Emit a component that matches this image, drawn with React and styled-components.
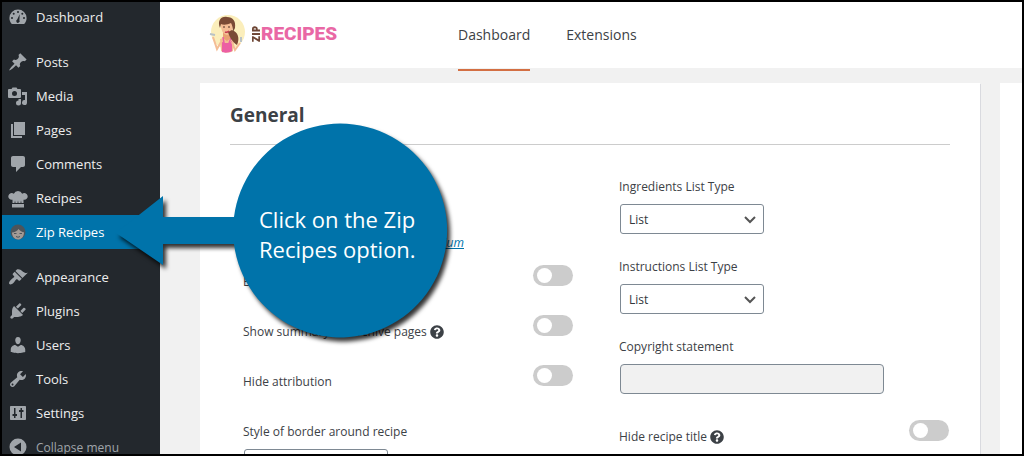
import React from 'react';
import styled, { createGlobalStyle } from 'styled-components';
import { FaQuestionCircle } from 'react-icons/fa';

const menu = [
  { label: 'Dashboard', icon: 'dashboard', gap: true },
  { label: 'Posts', icon: 'posts' },
  { label: 'Media', icon: 'media' },
  { label: 'Pages', icon: 'pages' },
  { label: 'Comments', icon: 'comments' },
  { label: 'Recipes', icon: 'chef' },
  { label: 'Zip Recipes', icon: 'zip', active: true, gap: true },
  { label: 'Appearance', icon: 'appearance' },
  { label: 'Plugins', icon: 'plugins' },
  { label: 'Users', icon: 'users' },
  { label: 'Tools', icon: 'tools' },
  { label: 'Settings', icon: 'settings' },
];

// 20x20 menu glyphs
const icons = {
  dashboard: (
    <path
      fillRule="evenodd"
      d="M3.800 17h12.400c1.500-1.600 2.400-3.700 2.400-6A8.600 8.600 0 0 0 10 2.500a8.600 8.600 0 0 0-8.600 8.500c0 2.300.9 4.400 2.400 6zM10 4a1 1 0 1 1 0 2 1 1 0 0 1 0-2zM5.700 5.800a1 1 0 1 1 0 2 1 1 0 0 1 0-2zm8.600 0a1 1 0 1 1 0 2 1 1 0 0 1 0-2zM4 10.100a1 1 0 1 1 0 2 1 1 0 0 1 0-2zm12 0a1 1 0 1 1 0 2 1 1 0 0 1 0-2zm-4.300-2.800-.3 5.900a1.700 1.700 0 1 1-2.200-.6z"
    />
  ),
  posts: (
    <path d="M10.440 3.020l1.820-1.820 6.360 6.350-1.830 1.820c-1.050-.68-2.480-.57-3.410.36l-.75.75c-.92.93-1.040 2.350-.35 3.410l-1.830 1.820-2.410-2.410-2.800 2.790c-.42.42-3.380 2.710-3.800 2.290s1.860-3.390 2.280-3.810l2.790-2.790L4.100 9.360l1.830-1.820c1.050.69 2.480.57 3.400-.36l.75-.75c.93-.92 1.050-2.350.36-3.410z" />
  ),
  media: (
    <path
      fillRule="evenodd"
      d="M1 3h2.500l1-1.500h4L9.500 3H12a1 1 0 0 1 1 1v7a1 1 0 0 1-1 1H1a1 1 0 0 1-1-1V4a1 1 0 0 1 1-1zm5.500 2a2.500 2.500 0 1 0 0 5 2.500 2.500 0 0 0 0-5zM14 6h5v10.500a2.500 2.500 0 1 1-2-2.400V9h-3zM10.500 13H13v4a2.500 2.500 0 1 1-2.500-2.500z"
    />
  ),
  pages: <path d="M6 15V2h11v13H6zm-1 1h9v2H3V4h2v12z" />,
  comments: <path d="M5 2h10c1.100 0 2 .9 2 2v7c0 1.100-.9 2-2 2h-2l-5 5v-5H5c-1.100 0-2-.9-2-2V4c0-1.100.9-2 2-2z" />,
  chef: (
    <path d="M4.500 15v-3.300A3.400 3.400 0 1 1 5.800 5.700a4.600 4.600 0 0 1 8.400 0 3.400 3.400 0 1 1 1.300 6V15h-2l-.5-2.500-.5 2.500h-2l-.5-2.500-.5 2.500h-2L7 12.500 6.500 15zM4 16h12v3.500H4z" />
  ),
  appearance: (
    <path d="M14.480 11.060L7.410 3.990l1.500-1.500c.5-.56 2.300-.47 3.510.32 1.210.8 1.430 1.280 2.910 2.100 1.180.64 2.450 1.260 4.450.85zm-.71.71L6.700 4.700 4.930 6.470c-.39.39-.39 1.020 0 1.410l1.060 1.060c.39.39.39 1.030 0 1.420-.6.6-1.430 1.110-2.210 1.690-.35.26-.7.53-1.010.84C1.430 14.230.4 16.080 1.400 17.070c.99 1 2.840-.03 4.180-1.360.31-.31.58-.66.85-1.020.57-.78 1.080-1.610 1.690-2.210.39-.39 1.020-.39 1.410 0l1.060 1.060c.39.39 1.020.39 1.410 0z" />
  ),
  plugins: (
    <path d="M13.110 4.360L9.870 7.600 8 5.730l3.240-3.240c.35-.34 1.050-.2 1.560.32.52.51.66 1.210.31 1.550zm-8 1.770l.91-1.120 9.010 9.010-1.190.84c-.71.71-2.630 1.160-3.820 1.160H6.140L4.900 17.260c-.59.59-1.540.59-2.120 0-.59-.58-.59-1.530 0-2.120l1.240-1.240v-3.880c0-1.130.4-3.190 1.090-3.890zm7.260 3.970l3.240-3.240c.34-.35 1.040-.21 1.550.31.52.51.66 1.210.31 1.550l-3.240 3.250z" />
  ),
  users: (
    <path d="M10 9.250c-2.270 0-2.730-3.440-2.730-3.440C7 4.020 7.820 2 9.970 2c2.160 0 2.980 2.020 2.710 3.810 0 0-.41 3.440-2.680 3.440zm0 2.570L12.720 10c2.390 0 4.520 2.330 4.520 4.530v2.490s-3.650 1.130-7.240 1.130c-3.650 0-7.240-1.130-7.240-1.130v-2.490c0-2.250 1.940-4.480 4.470-4.480z" />
  ),
  tools: (
    <path d="M16.680 9.770c-1.340 1.340-3.300 1.670-4.950.99l-5.410 6.520c-.99.99-2.590.99-3.580 0s-.99-2.590 0-3.570l6.520-5.420c-.68-1.650-.35-3.610.99-4.950 1.280-1.280 3.120-1.620 4.720-1.060l-2.890 2.890 2.820 2.820 2.860-2.870c.53 1.580.18 3.390-1.080 4.650zM3.810 16.210c.4.390 1.040.39 1.430 0 .4-.4.4-1.040 0-1.430-.39-.4-1.030-.4-1.430 0-.39.39-.39 1.030 0 1.430z" />
  ),
  settings: (
    <path
      fillRule="evenodd"
      d="M3 3h14c.6 0 1 .4 1 1v12c0 .6-.4 1-1 1H3c-.6 0-1-.4-1-1V4c0-.6.4-1 1-1zm3 2v6H4.500v2H6v2h1.500v-2H9v-2H7.500V5zm6.500 0v2H11v2h1.500v6H14V9h1.500V7H14V5z"
    />
  ),
  collapse: (
    <path fillRule="evenodd" d="M10 1.500a8.500 8.500 0 1 1 0 17 8.500 8.500 0 0 1 0-17zM13 5.500L6 10l7 4.500z" />
  ),
  zip: (
    <>
      <circle cx="10" cy="10" r="7.500" fill="#4d545a" />
      <path d="M4 10.500c2.500 0 5-1.500 6.500-3.500 1.500 2 3.500 3 5.500 3.200 0 4.300-2.500 7.300-6 7.300s-6-3-6-7z" fill="#a39a95" />
      <path d="M6 11.500h2.500M11.500 11.500H14M8 14.500q2 1.500 4 0" stroke="#4d545a" fill="none" />
    </>
  ),
};

const MenuIcon = ({ name }) => (
  <Glyph viewBox="0 0 20 20" aria-hidden="true">
    {icons[name]}
  </Glyph>
);

const Logo = () => (
  <LogoLink href="#home" aria-label="Zip Recipes">
    <LogoFace viewBox="0 0 40 40" aria-hidden="true">
      <circle cx="22" cy="18" r="17" fill="#fbeebb" />
      <path d="M17 18h8v7l-4 3-4-3z" fill="#e9a173" />
      <path d="M14 25l3-1 4 3 4-3 3 2-1 11c-3 2-9 2-12 0z" fill="#f4bd95" />
      <path d="M16 28l3 1h4l3-2v10c-3 2-8 2-10 1z" fill="#ec5fa3" />
      <path d="M17 23l1 6M25 24l-2 5" stroke="#ec5fa3" strokeWidth="1.500" />
      <path d="M15 9c1-4 12-4 12 2 0 6-3 10-6 10s-7-5-6-12z" fill="#f4bd95" />
      <path d="M14 14C11 7 15 2 21 3c6 0 9 4 8 11l-2 4c0-5-1-7-2-9-4 2-8 2-10 1z" fill="#7a4a35" />
      <path d="M26 16c6 2 8 8 5 15-5-3-8-9-9-13z" fill="#7a4a35" />
      <path d="M17 13h2M22 13h2" stroke="#4d2f25" />
      <path d="M19 18q2 1 4-1" stroke="#c33c50" strokeWidth="1.500" fill="none" />
      <path d="M15 28l-4 7-4-12M26 28l3 8 5-7" stroke="#f4bd95" strokeWidth="2" fill="none" />
      <path d="M4 20l5 1M35 28v-5" stroke="#b9c2c6" strokeWidth="2" />
    </LogoFace>
    <Zip>ZIP</Zip>
    <Wordmark>RECIPES</Wordmark>
  </LogoLink>
);

const ToggleField = ({ id, label, help }) => (
  <ToggleRow>
    <ToggleLabel htmlFor={id}>
      {label}
      {help && <FaQuestionCircle size={14} />}
    </ToggleLabel>
    <Switch type="checkbox" role="switch" id={id} />
  </ToggleRow>
);

const SelectField = ({ id, label, options }) => (
  <Field>
    <Label htmlFor={id}>{label}</Label>
    <SelectBox>
      <Select id={id}>
        {options.map((option) => (
          <option key={option}>{option}</option>
        ))}
      </Select>
      <Chevron viewBox="0 0 12 8" aria-hidden="true">
        <path d="M1 1l5 5 5-5" />
      </Chevron>
    </SelectBox>
  </Field>
);

const Callout = () => (
  <CalloutLayer>
    <CalloutShape viewBox="0 0 344 230" aria-hidden="true">
      <path d="M1 113L48 76V97H119A107 107 0 1 1 119 124H48V145Z" />
    </CalloutShape>
    <CalloutText>
      Click on the Zip
      <br />
      Recipes option.
    </CalloutText>
  </CalloutLayer>
);

const App = () => {
  return (
    <Page>
      <GlobalStyle />
      <Sidebar>
        <MenuList>
          {menu.map((item) => (
            <MenuItem key={item.label} $gap={item.gap}>
              <MenuLink href="#menu" $active={item.active}>
                <MenuIcon name={item.icon} />
                {item.label}
              </MenuLink>
            </MenuItem>
          ))}
          <MenuItem>
            <CollapseButton type="button">
              <MenuIcon name="collapse" />
              Collapse menu
            </CollapseButton>
          </MenuItem>
        </MenuList>
      </Sidebar>
      <Main>
        <Header>
          <Logo />
          <Nav>
            <NavLink href="#dashboard" $active>
              Dashboard
            </NavLink>
            <NavLink href="#extensions">Extensions</NavLink>
          </Nav>
        </Header>
        <Content>
          <Card>
            <CardTitle>General</CardTitle>
            <Columns>
              <Column>
                <Notice>
                  <a href="#premium">premium</a>
                </Notice>
                <ToggleField id="enable" label="Enable" />
                <ToggleField id="summary" label="Show summary on archive pages" help />
                <ToggleField id="attribution" label="Hide attribution" />
                <SelectField id="border" label="Style of border around recipe" options={['']} />
              </Column>
              <Column>
                <SelectField id="ingredients" label="Ingredients List Type" options={['List']} />
                <SelectField id="instructions" label="Instructions List Type" options={['List']} />
                <Field>
                  <Label htmlFor="copyright">Copyright statement</Label>
                  <TextInput id="copyright" type="text" disabled />
                </Field>
                <ToggleField id="title" label="Hide recipe title" help />
              </Column>
            </Columns>
          </Card>
          <Card as="aside" />
        </Content>
      </Main>
      <Callout />
      <Frame />
    </Page>
  );
};

export default App;

const GlobalStyle = createGlobalStyle`
  * {
    box-sizing: border-box;
  }
  body {
    margin: 0;
    background-color: #f1f1f1;
    color: #3c4146;
    font-family: 'Open Sans', 'Noto Sans', sans-serif;
    font-size: 13px;
    line-height: 20px;
  }
`;
const Page = styled.div`
  position: relative;
  display: flex;
  height: 100vh;
  overflow: hidden;
`;
const Frame = styled.div`
  position: fixed;
  inset: 0;
  border: 2px solid #000;
  pointer-events: none;
`;
const Sidebar = styled.nav`
  flex: none;
  width: 160px;
  background-color: #23282d;
`;
const MenuList = styled.ul`
  margin: 0;
  padding: 0;
  list-style: none;
`;
const MenuItem = styled.li`
  margin-bottom: ${({ $gap }) => ($gap ? '11px' : '0')};
`;
const MenuLink = styled.a`
  display: flex;
  align-items: center;
  gap: 8px;
  height: 34px;
  padding-left: 8px;
  color: ${({ $active }) => ($active ? '#fff' : '#eee')};
  background-color: ${({ $active }) => ($active ? '#0073aa' : 'transparent')};
  text-decoration: none;
`;
const CollapseButton = styled.button`
  display: flex;
  align-items: center;
  gap: 8px;
  width: 100%;
  height: 34px;
  padding: 0 0 0 8px;
  border: 0;
  background: none;
  color: #a0a5aa;
  font-family: inherit;
  font-size: 12px;
  cursor: pointer;
`;
const Glyph = styled.svg`
  flex: none;
  width: 20px;
  height: 20px;
  fill: #a0a5aa;
`;
const Main = styled.main`
  flex: 1;
  min-width: 0;
`;
const Header = styled.header`
  display: flex;
  height: 68px;
  padding-left: 46px;
  background-color: #fff;
`;
const LogoLink = styled.a`
  display: flex;
  align-items: center;
  width: 252px;
  text-decoration: none;
`;
const LogoFace = styled.svg`
  width: 40px;
  height: 40px;
  margin-right: 5px;
`;
const Zip = styled.span`
  color: #6d4534;
  font-size: 10px;
  font-weight: 800;
  line-height: 10px;
  writing-mode: vertical-rl;
  transform: rotate(180deg);
`;
const Wordmark = styled.span`
  color: #e968a5;
  font-family: 'Liberation Sans Narrow', Roboto, sans-serif;
  font-size: 19px;
  font-weight: 900;
`;
const Nav = styled.nav`
  display: flex;
  gap: 36px;
  height: 71px;
`;
const NavLink = styled.a`
  height: 71px;
  border-bottom: 2px solid ${({ $active }) => ($active ? '#d36f43' : 'transparent')};
  color: #3c4146;
  font-size: 14px;
  line-height: 69px;
  text-decoration: none;
`;
const Content = styled.div`
  display: grid;
  grid-template-columns: minmax(0, 1fr) 24px;
  gap: 20px;
  padding: 15px 0 0 40px;
`;
const Card = styled.section`
  min-height: 400px;
  padding: 0 30px;
  background-color: #fff;
  box-shadow: 1px 1px 0 #d9dadf;
`;
const CardTitle = styled.h2`
  margin: 0 0 32px;
  padding-top: 4px;
  border-bottom: 1px solid #ccc;
  font-size: 19px;
  line-height: 57px;
`;
const Columns = styled.div`
  display: grid;
  grid-template-columns: 1fr 1fr;
  gap: 46px;
  padding: 0 1px 0 13px;
`;
const Column = styled.div`
  display: flex;
  flex-direction: column;
`;
const Notice = styled.p`
  width: 221px;
  height: 88px;
  margin: 0;
  padding-top: 56px;
  font-size: 12px;
  font-style: italic;
  text-align: right;
  a {
    color: #0073aa;
  }
`;
const Field = styled.div`
  display: flex;
  flex-direction: column;
  gap: 7px;
  margin-bottom: 23px;
`;
const ToggleRow = styled.div`
  display: flex;
  align-items: flex-start;
  justify-content: space-between;
  height: 50px;
  ${Field} + & {
    margin-top: 3px;
  }
  & + ${Field} {
    margin-top: 7px;
  }
`;
const Label = styled.label`
  display: flex;
  align-items: center;
  gap: 3px;
  font-size: 12px;
`;
const ToggleLabel = styled(Label)`
  padding-top: 7px;
`;
const Switch = styled.input`
  appearance: none;
  flex: none;
  width: 40px;
  height: 21px;
  margin: 0;
  padding: 3px 4px;
  border-radius: 11px;
  background-color: #ccc;
  cursor: pointer;
  &::before {
    content: '';
    display: block;
    width: 15px;
    height: 15px;
    border-radius: 50%;
    background-color: #fff;
  }
`;
const SelectBox = styled.div`
  position: relative;
  width: 144px;
  margin-left: 1px;
`;
const Select = styled.select`
  appearance: none;
  display: block;
  width: 100%;
  height: 30px;
  padding: 0 24px 0 8px;
  border: 1px solid #7e8993;
  border-radius: 3px;
  background-color: #fff;
  color: #32373c;
  font-family: inherit;
  font-size: 12px;
`;
const Chevron = styled.svg`
  position: absolute;
  top: 12px;
  right: 8px;
  width: 12px;
  height: 8px;
  fill: none;
  stroke: #555;
  stroke-width: 2;
  pointer-events: none;
`;
const TextInput = styled.input`
  width: 264px;
  height: 30px;
  margin-left: 1px;
  border: 1px solid #7e8993;
  border-radius: 4px;
  background-color: #f1f1f1;
`;
const CalloutLayer = styled.div`
  position: absolute;
  top: 120px;
  left: 115px;
  width: 344px;
  height: 230px;
`;
const CalloutShape = styled.svg`
  width: 344px;
  height: 230px;
  overflow: visible;
  fill: #0073aa;
  filter: drop-shadow(3px 4px 2px rgba(0, 0, 0, 0.8));
`;
const CalloutText = styled.p`
  position: absolute;
  top: 84px;
  left: 144px;
  margin: 0;
  color: #fff;
  font-size: 22px;
  font-weight: 500;
  line-height: 30px;
  white-space: nowrap;
`;
